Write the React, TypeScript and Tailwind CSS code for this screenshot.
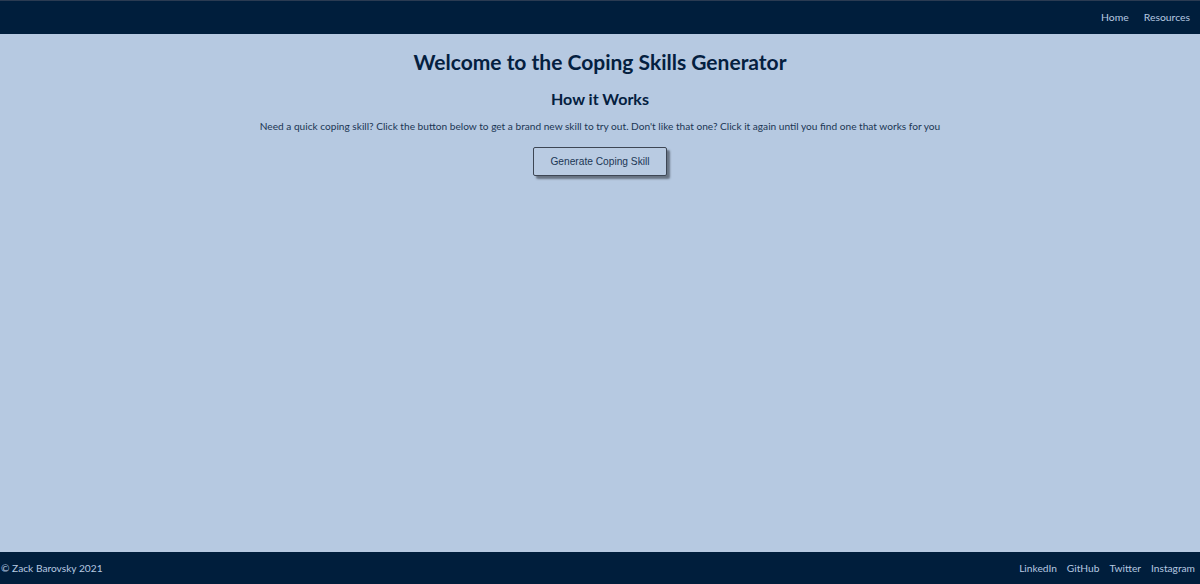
import React from 'react';

export default function App() {
  const socials = ['LinkedIn', 'GitHub', 'Twitter', 'Instagram'];

  return (
    <div
      className="flex h-[584px] flex-col bg-[#b6c9e1] text-[#04203f]"
      style={{ fontFamily: 'Lato, "Open Sans", sans-serif' }}
    >
      {/* Nav */}
      <header className="flex h-[34px] items-center justify-end gap-[15px] border-t border-[#2a3b52] bg-[#001e3c] pr-[10px] pt-[1px] text-[10.4px] text-[#b6c9e1]">
        <a href="#">Home</a>
        <a href="#">Resources</a>
      </header>

      {/* Main */}
      <main className="flex flex-1 flex-col items-center">
        <h1 className="mt-[14px] text-[21px] font-bold leading-[28px]">Welcome to the Coping Skills Generator</h1>
        <h2 className="mt-[12px] text-[16px] font-bold leading-[22px]">How it Works</h2>
        <p className="mt-[9px] text-[10.15px] leading-[14px] text-[#1b3654]">
          Need a quick coping skill? Click the button below to get a brand new skill to try out. Don't like that one? Click it again until you find one that works for you
        </p>
        <button
          className="mt-[14px] h-[29px] w-[134px] rounded-[2px] border border-[#3d4654] bg-[#b9cbe2] text-[10.2px] text-[#1b3654] shadow-[3px_3px_2px_rgba(40,45,55,0.55)]"
          style={{ fontFamily: '"Liberation Sans", Arial, sans-serif' }}
        >
          Generate Coping Skill
        </button>
      </main>

      {/* Footer */}
      <footer className="flex h-[32px] items-center justify-between bg-[#001e3c] pl-[1px] pt-[2px] text-[10.2px] text-[#b6c9e1]">
        <span>© Zack Barovsky 2021</span>
        <div className="flex gap-[10px] pr-[5px]">
          {socials.map((s) => (
            <a key={s} href="#">{s}</a>
          ))}
        </div>
      </footer>
    </div>
  );
}
